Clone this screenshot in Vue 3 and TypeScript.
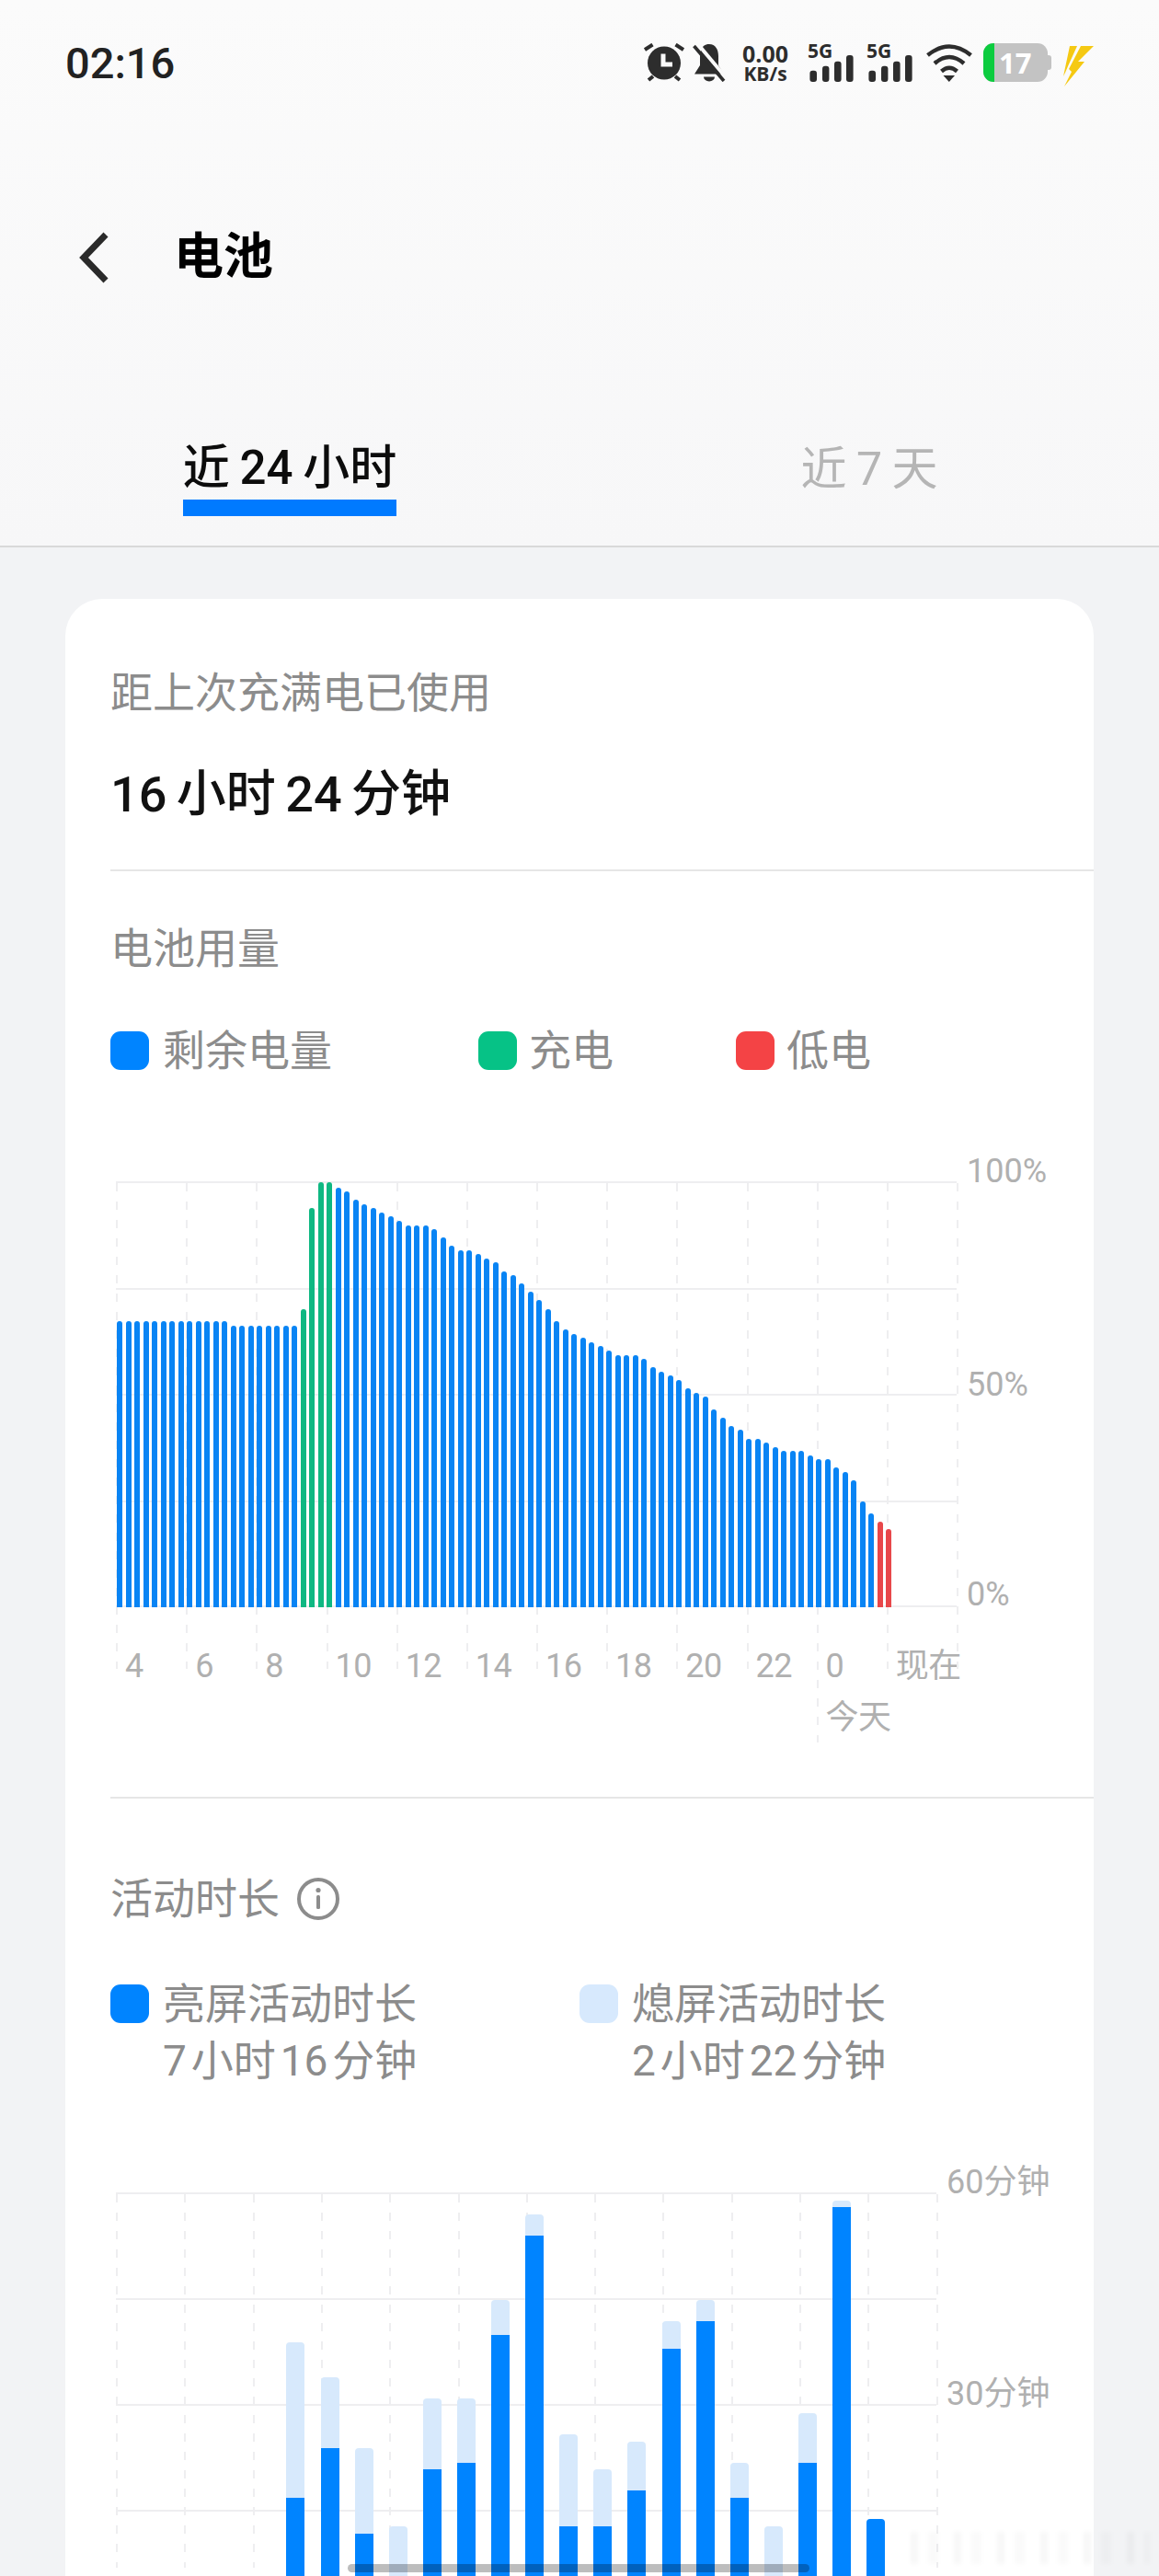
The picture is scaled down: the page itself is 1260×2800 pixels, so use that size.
<script setup lang="ts">
type BatteryBar = { h: number; color: string }
type UsageBar = { light: number; dark: number; last: boolean }

const repeat = (v: number, n: number): number[] => Array(n).fill(v)

// tops of the battery bars, measured on a 3x crop with the baseline at 1463
const batteryTops: number[] = [
  ...repeat(530, 13),
  ...repeat(545, 8),
  490, 160, 78, 78, 95, 107, 133, 149, 160, 175, 187, 203, 217, 217, 217, 229, 257, 284, 298, 298, 312,
  325, 337, 367, 379, 406, 433, 460, 490, 530, 557, 571, 583, 598, 610, 625, 641, 641, 641, 653, 680,
  695, 707, 722, 749, 763, 775, 817, 845, 871, 883, 913, 913, 926, 941, 953, 953, 953, 968, 980, 980,
  1007, 1022, 1049, 1118, 1157, 1185, 1208,
]

const batteryBars: BatteryBar[] = batteryTops.map((top, i) => ({
  h: (1463 - top) / 3,
  color: i >= 21 && i <= 24 ? '#0fb882' : i >= 87 ? '#e8474a' : '#0984f4',
}))

// [light top, dark top] on a 3x crop, 0 means no such part
const usageTops: [number, number][] = [
  [0, 0], [0, 0], [0, 0], [0, 0], [0, 0],
  [618, 1125], [732, 963], [963, 1242], [1218, 1440], [801, 1032], [801, 1011],
  [480, 594], [201, 270], [918, 1218], [1032, 1218], [942, 1101], [549, 639], [480, 549],
  [1011, 1125], [1218, 1440], [849, 1011], [156, 177], [0, 1194], [0, 0],
]

const usageBars: UsageBar[] = usageTops.map(([l, d]) => ({
  light: l ? (d - l) / 3 : 0,
  dark: d ? 503 - d / 3 : 0,
  last: !l && !!d,
}))

const batteryCols = Array.from({ length: 13 }, (_, i) => i)
const batteryRows = [0, 115.5, 231, 346.5, 461]
const usageCols = Array.from({ length: 13 }, (_, i) => i)
const usageRows = [0, 115, 230, 345]
const hours = ['4', '6', '8', '10', '12', '14', '16', '18', '20', '22', '0', '现在']
</script>

<template>
  <div class="page">
    <header class="head">
      <div class="status">
        <span class="time">02:16</span>
        <div class="status-icons">
          <svg class="ic-alarm" width="44" height="42" viewBox="0 0 44 42">
            <circle cx="22" cy="21.5" r="18" fill="#2d2d2d" />
            <path d="M1 7 9.5 1.5M43 7 34.5 1.5M5 40l5-4M39 40l-5-4" stroke="#2d2d2d" stroke-width="4" fill="none" />
            <path d="M21 11.5V23H31" stroke="#fafafa" stroke-width="5" fill="none" />
          </svg>
          <svg class="ic-bell" width="36" height="42" viewBox="0 0 36 42">
            <path d="M18 1C11 1 8 7 8 14V24L2 33.5H34L28 24V14C28 7 25 1 18 1Z" fill="#2d2d2d" />
            <path d="M12 36.5H24A6 5 0 0 1 12 36.5Z" fill="#2d2d2d" />
            <path d="M5 0 36 37" stroke="#fafafa" stroke-width="4" />
            <path d="M1.5 3 34 41" stroke="#2d2d2d" stroke-width="3.6" />
          </svg>
          <div class="speed">
            <span class="speed-num">0.00</span>
            <span class="speed-unit">KB/s</span>
          </div>
          <div v-for="n in 2" :key="n" class="net">
            <span class="net-text">5G</span>
            <svg width="50" height="42" viewBox="0 0 50 42">
              <rect x="2.4" y="29.7" width="7.6" height="12.3" rx="3" fill="#2d2d2d" />
              <rect x="16" y="24.7" width="7.4" height="17.3" rx="3" fill="#2d2d2d" />
              <rect x="29" y="19.7" width="7.6" height="22.3" rx="3" fill="#2d2d2d" />
              <rect x="42" y="13" width="7.6" height="29" rx="3" fill="#2d2d2d" />
            </svg>
          </div>
          <svg class="ic-wifi" width="50" height="42" viewBox="0 0 50 42">
            <path d="M1.5 13Q25-6 48.5 13" stroke="#2d2d2d" stroke-width="4.4" fill="none" />
            <path d="M9 22Q25 8 41 22" stroke="#2d2d2d" stroke-width="4.4" fill="none" />
            <path d="M16.5 30.5Q25 23 33.5 30.5" stroke="#2d2d2d" stroke-width="4.4" fill="none" />
            <path d="M18.5 35H31L24.8 42Z" fill="#2d2d2d" />
          </svg>
          <div class="battery">
            <div class="battery-body">
              <div class="battery-fill"></div>
              <span class="battery-num">17</span>
            </div>
            <div class="battery-nub"></div>
          </div>
          <svg class="ic-bolt" width="36" height="44" viewBox="0 0 36 44">
            <path d="M9 0H17L7 22 4 29 2 33Z" fill="#f5c913" />
            <path d="M21 0H35L18 17H25L3 44 11 28 8 25Z" fill="#f5c913" />
          </svg>
        </div>
      </div>

      <div class="titlebar">
        <svg class="back" width="36" height="58" viewBox="0 0 36 58">
          <path d="M30 4 6 29 30 54" stroke="#2a2a2a" stroke-width="7" fill="none" />
        </svg>
        <h1 class="title">电池</h1>
      </div>

      <div class="tabs">
        <div class="tab"><span class="tab-label active">近 24 小时</span></div>
        <div class="tab"><span class="tab-label idle">近 7 天</span></div>
      </div>
    </header>

    <div class="card">
      <section class="sec sec-used">
        <div class="sec-label">距上次充满电已使用</div>
        <div class="used-value">16 小时 24 分钟</div>
      </section>

      <section class="sec sec-battery">
        <div class="sec-label">电池用量</div>
        <div class="legend">
          <div class="legend-item w-remain"><i class="dot blue"></i>剩余电量</div>
          <div class="legend-item w-charge"><i class="dot green"></i>充电</div>
          <div class="legend-item"><i class="dot red"></i>低电</div>
        </div>
        <div class="chart-row battery-row">
          <div class="plot plot-battery">
            <div v-for="y in batteryRows" :key="y" class="hline" :style="{ top: y + 'px' }"></div>
            <div
              v-for="c in batteryCols"
              :key="c"
              class="vline"
              :class="{ tall: c === 10 }"
              :style="{ left: c * 76.17 + 'px' }"
            ></div>
            <div class="battery-bars">
              <div
                v-for="(b, i) in batteryBars"
                :key="i"
                class="battery-bar"
                :style="{ height: b.h + 'px', background: b.color }"
              ></div>
            </div>
          </div>
          <div class="y-axis y-battery">
            <span>100%</span>
            <span>50%</span>
            <span>0%</span>
          </div>
        </div>
        <div class="x-axis">
          <div v-for="h in hours" :key="h" class="x-cell">
            <span>{{ h }}</span>
            <span v-if="h === '0'" class="today">今天</span>
          </div>
        </div>
      </section>

      <section class="sec sec-usage">
        <div class="sec-label with-icon">
          活动时长
          <svg class="info" width="46" height="46" viewBox="0 0 46 46">
            <circle cx="23" cy="23" r="21" stroke="#8c8c8c" stroke-width="4" fill="none" />
            <circle cx="23" cy="13.5" r="2.6" fill="#8c8c8c" />
            <rect x="21" y="19" width="4" height="15" rx="1.5" fill="#8c8c8c" />
          </svg>
        </div>
        <div class="legend two">
          <div class="legend-item usage-item">
            <i class="dot blue"></i>
            <div>亮屏活动时长<br />7 小时 16 分钟</div>
          </div>
          <div class="legend-item usage-item">
            <i class="dot pale"></i>
            <div>熄屏活动时长<br />2 小时 22 分钟</div>
          </div>
        </div>
        <div class="chart-row usage-row">
          <div class="plot plot-usage">
            <div v-for="y in usageRows" :key="y" class="hline" :style="{ top: y + 'px' }"></div>
            <div v-for="c in usageCols" :key="c" class="vline" :style="{ left: c * 74.3 + 'px' }"></div>
            <div class="usage-bars">
              <div v-for="(b, i) in usageBars" :key="i" class="usage-bar">
                <div class="usage-light" :style="{ height: b.light + 'px' }"></div>
                <div class="usage-dark" :class="{ round: b.last }" :style="{ height: b.dark + 'px' }"></div>
              </div>
            </div>
          </div>
          <div class="y-axis y-usage">
            <span>60分钟</span>
            <span>30分钟</span>
          </div>
        </div>
      </section>
    </div>

    <div class="watermark"></div>
    <div class="gesture"></div>
  </div>
</template>

<style>
html,
body {
  margin: 0;
  background: #f2f3f5;
}
</style>

<style scoped>
.page {
  position: relative;
  width: 1260px;
  height: 2800px;
  overflow: hidden;
  background: #f2f3f5;
  font-family: Roboto, 'Noto Sans CJK SC', sans-serif;
}

.head {
  background: linear-gradient(to bottom, #fbfbfb, #f7f7f8);
  border-bottom: 2px solid #d9d9d9;
}

.status {
  height: 136px;
  padding: 0 70px 0 71px;
  display: flex;
  align-items: center;
  justify-content: space-between;
}

.time {
  font-size: 47px;
  font-weight: 500;
  color: #222;
}

.status-icons {
  display: flex;
  align-items: center;
}

.ic-bell {
  margin-left: 9px;
}

.speed {
  margin-left: 16px;
  width: 54px;
  display: flex;
  flex-direction: column;
  align-items: center;
  font-family: 'Open Sans', sans-serif;
  font-weight: 700;
  color: #2d2d2d;
}

.speed-num {
  font-size: 25px;
  line-height: 24px;
}

.speed-unit {
  font-size: 21px;
  line-height: 20px;
}

.net {
  position: relative;
  height: 42px;
  margin-left: 19px;
}

.net + .net {
  margin-left: 14px;
}

.net svg {
  display: block;
}

.net-text {
  position: absolute;
  left: 0;
  top: -6px;
  font-family: 'Open Sans', sans-serif;
  font-size: 21px;
  line-height: 28px;
  font-weight: 700;
  color: #2d2d2d;
}

.ic-wifi {
  margin-left: 15px;
}

.battery {
  margin-left: 12px;
  display: flex;
  align-items: center;
}

.battery-body {
  position: relative;
  width: 70px;
  height: 42px;
  border-radius: 11px;
  overflow: hidden;
  background: #c3c3c3;
}

.battery-fill {
  width: 12px;
  height: 100%;
  background: #0ccc3f;
}

.battery-num {
  position: absolute;
  left: 17px;
  top: 0;
  line-height: 42px;
  font-family: 'Open Sans', sans-serif;
  font-size: 31px;
  font-weight: 700;
  color: #fff;
}

.battery-nub {
  width: 4px;
  height: 16px;
  border-radius: 0 3px 3px 0;
  background: #c3c3c3;
}

.ic-bolt {
  margin-left: 11px;
  margin-top: 8px;
}

.titlebar {
  height: 186px;
  display: flex;
  align-items: center;
  box-sizing: border-box;
  padding: 102px 0 0 85px;
}

.back {
  flex: none;
}

.title {
  margin: 0 0 0 68px;
  font-size: 54px;
  line-height: 72px;
  font-weight: 700;
  color: #000;
}

.tabs {
  display: flex;
  height: 271px;
  box-sizing: border-box;
  padding-top: 152px;
}

.tab {
  flex: 1;
  text-align: center;
}

.tab-label {
  display: inline-block;
  font-size: 51px;
  line-height: 69px;
  word-spacing: -2px;
  color: #b5b5b5;
}

.tab-label.idle {
  margin-top: 2px;
  font-size: 50px;
}

.tab-label.active {
  color: #0c0c0c;
  font-weight: 500;
  border-bottom: 18px solid #007aff;
}

.card {
  margin: 56px 71px 0;
  padding-left: 49px;
  background: #fff;
  border-radius: 40px 40px 0 0;
}

.sec {
  border-bottom: 2px solid #e6e6e6;
}

.sec-used {
  padding: 72px 0 46px;
}

.sec-label {
  font-size: 46px;
  line-height: 60px;
  color: #8c8c8c;
}

.used-value {
  margin-top: 46px;
  font-size: 54px;
  line-height: 70px;
  font-weight: 500;
  word-spacing: -3px;
  color: #111;
}

.sec-battery {
  padding: 54px 0 64px;
}

.legend {
  display: flex;
  margin-top: 51px;
}

.legend-item {
  display: flex;
  align-items: center;
  font-size: 46px;
  line-height: 60px;
  color: #8c8c8c;
}

.w-remain {
  width: 400px;
}

.w-charge {
  width: 280px;
}

.dot {
  flex: none;
  width: 42px;
  height: 42px;
  margin-right: 15px;
  border-radius: 11px;
}

.w-charge .dot,
.w-charge + .legend-item .dot {
  margin-right: 13px;
}

.blue {
  background: #0084ff;
}

.green {
  background: #06c286;
}

.red {
  background: #f44345;
}

.pale {
  background: #d7e9fd;
}

.chart-row {
  display: flex;
  margin-left: 6px;
}

.battery-row {
  margin-top: 112px;
}

.plot {
  position: relative;
  flex: none;
}

.plot-battery {
  width: 914px;
  height: 463px;
}

.plot-usage {
  width: 892px;
  height: 460px;
}

.hline {
  position: absolute;
  left: 0;
  right: 0;
  height: 2px;
  background: #eeeef0;
}

.vline {
  position: absolute;
  top: 2px;
  width: 2px;
  background: repeating-linear-gradient(to bottom, #eeeef0 0 9px, transparent 9px 20px);
}

.plot-battery .vline {
  height: 528px;
}

.plot-battery .vline.tall {
  height: 608px;
}

.plot-usage .vline {
  height: 406px;
}

.battery-bars {
  position: absolute;
  left: 1px;
  bottom: 0;
  display: flex;
  align-items: flex-end;
  gap: 3.5px;
}

.battery-bar {
  width: 6px;
  border-radius: 3px 3px 0 0;
}

.usage-bars {
  position: absolute;
  left: 0;
  bottom: 0;
  display: flex;
  align-items: flex-end;
  gap: 17.1px;
}

.usage-bar {
  width: 20px;
  display: flex;
  flex-direction: column;
}

.usage-light {
  background: #d7e9fc;
  border-radius: 4px 4px 0 0;
}

.usage-dark {
  background: #0084ff;
}

.usage-dark.round {
  border-radius: 4px 4px 0 0;
}

.y-axis {
  display: flex;
  flex-direction: column;
  margin-left: 11px;
  font-size: 36px;
  line-height: 44px;
  color: #b0b0b0;
}

.y-battery {
  margin-top: -33px;
}

.y-battery span:nth-child(2) {
  margin-top: 188px;
}

.y-battery span:nth-child(3) {
  margin-top: 184px;
}

.y-usage {
  margin-top: -33px;
}

.y-usage span:nth-child(2) {
  margin-top: 186px;
}

.x-axis {
  display: grid;
  grid-template-columns: repeat(12, 76.17px);
  margin: 34px 0 0 6px;
  font-size: 36px;
  line-height: 44px;
  letter-spacing: -0.5px;
  color: #b0b0b0;
}

.x-cell {
  display: flex;
  flex-direction: column;
  padding-left: 10px;
  white-space: nowrap;
}

.today {
  margin-top: 12px;
}

.sec-usage {
  padding: 79px 0 0;
  border-bottom: none;
}

.with-icon {
  display: flex;
  align-items: center;
}

.info {
  margin-left: 19px;
}

.two {
  margin-top: 53px;
}

.usage-item {
  width: 510px;
  align-items: flex-start;
  line-height: 62px;
  word-spacing: -6.5px;
}

.usage-item .dot {
  margin-top: 10px;
}

.usage-row {
  margin-top: 112px;
}

.watermark {
  position: absolute;
  left: 990px;
  top: 2752px;
  width: 260px;
  height: 35px;
  filter: blur(2px);
  background: repeating-linear-gradient(
    to right,
    rgba(0, 0, 0, 0.03) 0 8px,
    transparent 8px 19px,
    rgba(0, 0, 0, 0.02) 19px 30px,
    transparent 30px 47px
  );
}

.gesture {
  position: absolute;
  left: 378px;
  top: 2787px;
  width: 502px;
  height: 9px;
  border-radius: 5px;
  background: rgba(0, 0, 0, 0.26);
}
</style>
